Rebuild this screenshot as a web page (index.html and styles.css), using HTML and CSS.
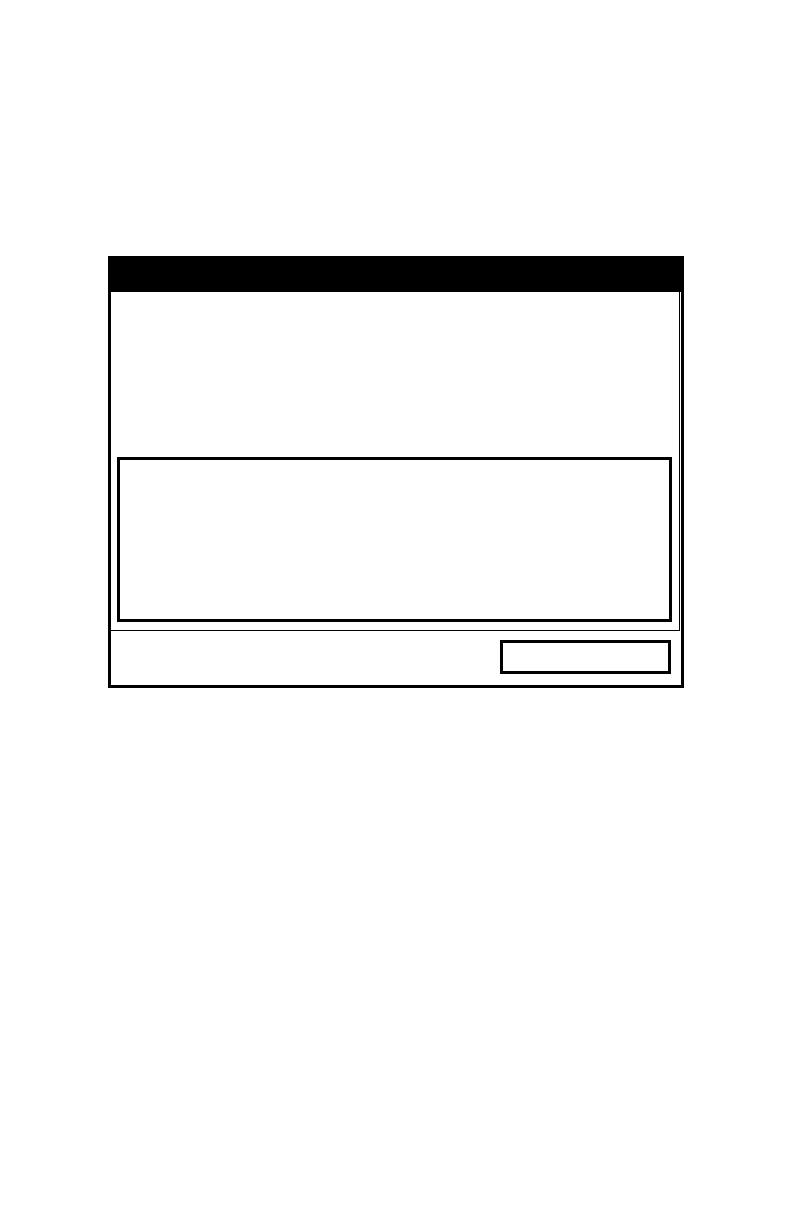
FILE: index.html
```html
<!DOCTYPE html>
<html lang="en">
<head>
<meta charset="utf-8">
<title>Dialog</title>
<link rel="stylesheet" href="styles.css">
</head>
<body>
<main class="page">
  <section class="dialog" role="dialog">
    <header class="dialog-title"></header>
    <div class="dialog-body">
      <div class="message"></div>
      <div class="details"></div>
    </div>
    <footer class="dialog-footer">
      <button class="action" type="button"></button>
    </footer>
  </section>
</main>
</body>
</html>
```

FILE: styles.css
```css
* {
  box-sizing: border-box;
}

body {
  margin: 0;
  background: #fff;
  color: #000;
  font-family: "Liberation Sans", Arial, sans-serif;
}

.page {
  min-height: 100vh;
  padding: 256px 108px;
}

.dialog {
  display: flex;
  flex-direction: column;
  border: 3px solid #000;
}

.dialog-title {
  min-height: 33px;
  background: #000;
}

.dialog-body {
  display: flex;
  flex-direction: column;
  margin-right: 1px;
  padding: 0 7px 8px 6px;
  border-right: 1px solid #000;
  border-bottom: 1px solid #000;
}

.message {
  min-height: 165px;
}

.details {
  min-height: 165px;
  border: 3px solid #000;
}

.dialog-footer {
  display: flex;
  justify-content: flex-end;
  padding: 9px 10px 11px;
}

.action {
  width: 30%;
  min-width: 171px;
  min-height: 34px;
  padding: 0;
  border: 3px solid #000;
  border-radius: 0;
  background: #fff;
}
```
